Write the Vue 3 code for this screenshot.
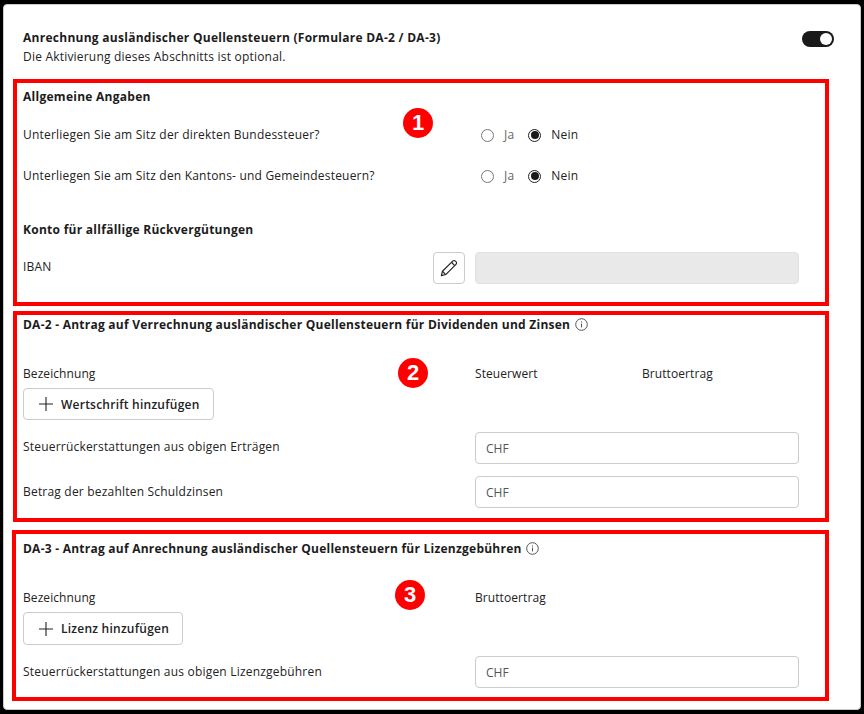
<script setup>
const rows = [
  'Unterliegen Sie am Sitz der direkten Bundessteuer?',
  'Unterliegen Sie am Sitz den Kantons- und Gemeindesteuern?',
]
</script>

<template>
  <div class="frame">
    <main class="card">
      <header class="head">
        <div>
          <h1 class="strong">Anrechnung ausländischer Quellensteuern (Formulare DA-2 / DA-3)</h1>
          <p class="sub">Die Aktivierung dieses Abschnitts ist optional.</p>
        </div>
        <span class="toggle"><span class="knob"></span></span>
      </header>

      <section class="box box1">
        <span class="badge b1">1</span>
        <h2 class="strong title1">Allgemeine Angaben</h2>
        <div v-for="(r, i) in rows" :key="i" class="row radio-row">
          <span class="label">{{ r }}</span>
          <div class="radios">
            <span class="radio"></span><span class="opt muted">Ja</span>
            <span class="radio on"></span><span class="opt">Nein</span>
          </div>
        </div>
        <h2 class="strong title2">Konto für allfällige Rückvergütungen</h2>
        <div class="iban">
          <span class="label up">IBAN</span>
          <button class="edit" aria-label="Bearbeiten">
            <svg width="18" height="18" viewBox="0 0 16 16" fill="none" stroke="#222" stroke-width="1" stroke-linejoin="round">
              <path d="M1.2 14.8l1-3.9L11.3 1.8a1.6 1.6 0 0 1 2.3 0l.6.6a1.6 1.6 0 0 1 0 2.3L5.1 13.8z"/>
              <path d="M10.2 2.9l2.9 2.9M2.2 10.9l2.9 2.9"/>
            </svg>
          </button>
          <div class="field disabled"></div>
        </div>
      </section>

      <section class="box box2">
        <span class="badge b2">2</span>
        <h2 class="strong title-info">
          DA-2 - Antrag auf Verrechnung ausländischer Quellensteuern für Dividenden und Zinsen
          <svg class="info" width="13" height="13" viewBox="0 0 13 13" fill="none" stroke="#555"><circle cx="6.5" cy="6.5" r="5.8"/><path d="M6.5 5.6v3.8M6.5 3.4v1.1"/></svg>
        </h2>
        <div class="cols">
          <span class="label">Bezeichnung</span>
          <span class="c1">Steuerwert</span>
          <span class="c2">Bruttoertrag</span>
        </div>
        <button class="add wide">
          <svg width="14" height="14" viewBox="0 0 14 14" stroke="#222" stroke-width="1.1"><path d="M7 0v14M0 7h14"/></svg>
          Wertschrift hinzufügen
        </button>
        <div class="row input-row r-first">
          <span class="label up">Steuerrückerstattungen aus obigen Erträgen</span>
          <div class="field">CHF</div>
        </div>
        <div class="row input-row r-second">
          <span class="label">Betrag der bezahlten Schuldzinsen</span>
          <div class="field">CHF</div>
        </div>
      </section>

      <section class="box box3">
        <span class="badge b3">3</span>
        <h2 class="strong title-info">
          DA-3 - Antrag auf Anrechnung ausländischer Quellensteuern für Lizenzgebühren
          <svg class="info" width="13" height="13" viewBox="0 0 13 13" fill="none" stroke="#555"><circle cx="6.5" cy="6.5" r="5.8"/><path d="M6.5 5.6v3.8M6.5 3.4v1.1"/></svg>
        </h2>
        <div class="cols">
          <span class="label">Bezeichnung</span>
          <span class="c1">Bruttoertrag</span>
        </div>
        <button class="add narrow">
          <svg width="14" height="14" viewBox="0 0 14 14" stroke="#222" stroke-width="1.1"><path d="M7 0v14M0 7h14"/></svg>
          Lizenz hinzufügen
        </button>
        <div class="row input-row r-first">
          <span class="label">Steuerrückerstattungen aus obigen Lizenzgebühren</span>
          <div class="field">CHF</div>
        </div>
      </section>
    </main>
  </div>
</template>

<style>
html, body { margin: 0; background: #000; }
</style>

<style scoped>
.frame {
  width: 864px; height: 714px; box-sizing: border-box;
  padding: 4px 3px 4px 3px; background: #000; overflow: hidden;
  font-family: "Open Sans", "Noto Sans", sans-serif; font-size: 12px; color: #222; letter-spacing: .2px;
}
.card {
  height: 100%; box-sizing: border-box; background: #fff;
  border: 1px solid #ccc; border-radius: 4px; padding: 25px 0 0 9px;
}
h1, h2, p { margin: 0; }
.strong { font-size: 12px; font-weight: 700; color: #1c1c1c; line-height: 16px; letter-spacing: .27px; }
.head { display: flex; justify-content: space-between; align-items: flex-start; padding: 0 26px 0 10px; }
.sub { margin-top: 3px; line-height: 16px; }
.toggle {
  width: 32px; height: 16px; margin-top: 1px; background: #1a1a1a; border-radius: 8px;
  display: flex; align-items: center; justify-content: flex-end; padding-right: 2px; box-sizing: border-box;
}
.knob { width: 12px; height: 12px; background: #fff; border-radius: 50%; }
.box { position: relative; box-sizing: border-box; width: 816px; border: 4px solid #f00; padding: 0 0 0 6px; }
.box1 { height: 227px; margin-top: 14px; }
.box2 { height: 211px; margin-top: 5px; }
.box3 { width: 817px; height: 171px; margin-top: 8px; margin-left: -1px; padding-left: 7px; }
.badge {
  position: absolute; width: 30px; height: 30px; border-radius: 50%;
  background: #f00; color: #fff; font: 700 22px/30px "Liberation Sans", sans-serif; text-align: center; letter-spacing: 0;
}
.b1 { left: 386px; top: 25px; }
.b2 { left: 381px; top: 43px; }
.b3 { left: 379px; top: 46px; }
.title1 { margin-top: 6px; }
.row { display: grid; grid-template-columns: 452px 324px; align-items: center; }
.radio-row { height: 40px; }
.title1 + .radio-row { margin-top: 10px; margin-bottom: 1px; }
.label { line-height: 16px; }
.up { position: relative; top: -1px; }
.radios { display: flex; align-items: center; padding-left: 6px; }
.radio {
  width: 13px; height: 13px; box-sizing: border-box; border-radius: 50%;
  border: 1px solid #767676; background: #fff; position: relative;
}
.radio.on { border-color: #222; }
.radio.on::after {
  content: ""; position: absolute; inset: 1.5px; border-radius: 50%; background: #1a1a1a;
}
.opt { margin-left: 10px; margin-right: 14px; line-height: 16px; }
.muted { color: #666; }
.title2 { margin-top: 26px; }
.iban { display: grid; grid-template-columns: 410px 32px 324px; align-items: center; margin-top: 14px; }
.iban .field { margin-left: 10px; }
.edit {
  width: 32px; height: 32px; padding: 0; display: flex; align-items: center; justify-content: center;
  background: #fff; border: 1px solid #ccc; border-radius: 4px;
}
.field {
  height: 32px; width: 324px; box-sizing: border-box; border: 1px solid #ccc; border-radius: 4px;
  padding: 0 10px; line-height: 32px; color: #555; background: #fff; letter-spacing: 0;
}
.field.disabled { background: #e9e9e9; border-color: #e2e2e2; }
.title-info { margin-top: 2px; letter-spacing: .24px; }
.box3 .title-info { margin-top: 7px; }
.info { vertical-align: -2px; margin-left: 1px; }
.cols { position: relative; display: grid; grid-template-columns: 452px 167px auto; margin-top: 33px; line-height: 16px; letter-spacing: .08px; }
.add {
  display: flex; align-items: center; gap: 8px; height: 32px; padding: 0 0 0 15px; margin-top: 6px;
  background: #fff; border: 1px solid #ccc; border-radius: 4px;
  font: 600 12px "Open Sans", "Noto Sans", sans-serif; letter-spacing: .23px; color: #222; box-sizing: border-box;
}
.wide { width: 191px; }
.narrow { width: 160px; height: 33px; }
.r-first { margin-top: 12px; }
.r-second { margin-top: 12px; }
.box3 .r-first { margin-top: 11px; }
</style>
